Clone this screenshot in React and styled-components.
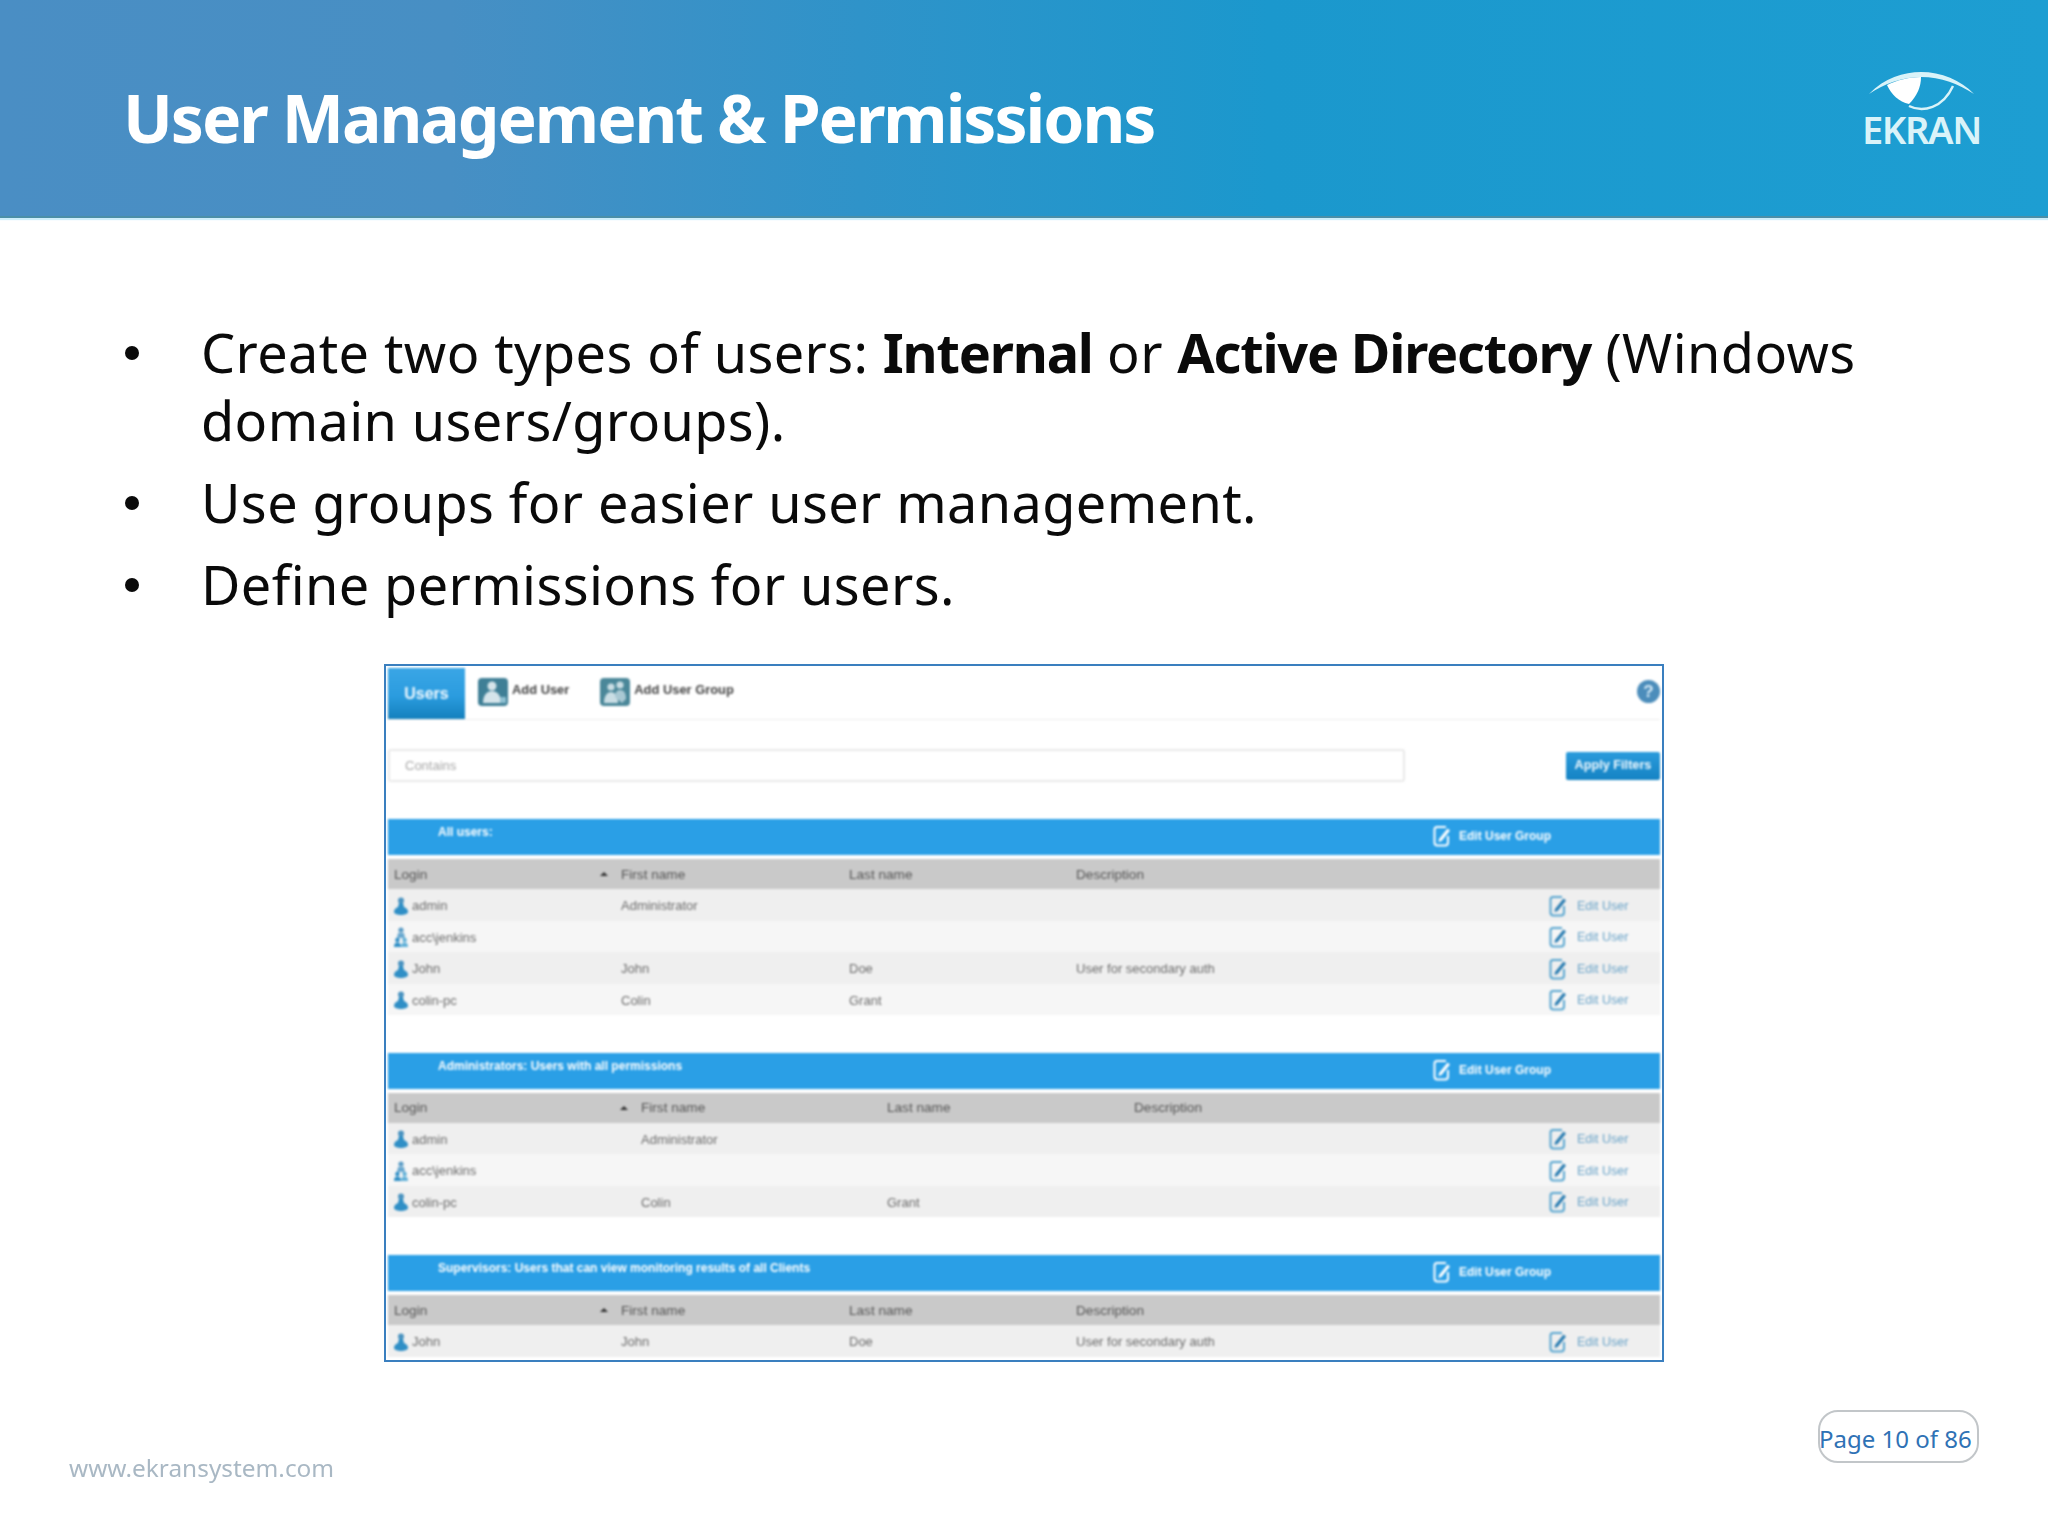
import React from 'react'
import styled, { createGlobalStyle } from 'styled-components'

const GlobalStyle = createGlobalStyle`
  html, body {
    margin: 0;
    padding: 0;
    background: #fff;
  }
`

const Slide = styled.div`
  width: 2048px;
  height: 1536px;
  display: flex;
  flex-direction: column;
  overflow: hidden;
  background: #fff;
  font-family: "Noto Sans", "Open Sans", sans-serif;
`

const Header = styled.header`
  height: 216px;
  flex: none;
  display: flex;
  align-items: flex-start;
  justify-content: space-between;
  padding: 0 68px 0 123px;
  background: linear-gradient(90deg, #4a8ec4 0%, #478fc4 22%, #2f93c9 42%, #1b98cd 62%, #1d9ed2 100%);
  border-bottom: 2px solid #4b8fa8;
  box-shadow: 0 2px 1px #cdeefb;
`

const Title = styled.h1`
  margin: 78px 0 0;
  font-size: 66px;
  line-height: 78px;
  font-weight: 700;
  letter-spacing: -2.05px;
  color: #fff;
  white-space: nowrap;
`

const Logo = styled.div`
  margin-top: 72px;
  width: 117px;
  display: flex;
  flex-direction: column;
  align-items: center;
  color: #d9f3f9;
`

const LogoText = styled.div`
  margin-top: -2px;
  font-size: 38px;
  line-height: 38px;
  font-weight: 600;
  letter-spacing: -1.4px;
`

const Bullets = styled.ul`
  list-style: none;
  margin: 100px 0 0;
  padding: 0 0 0 125px;
  display: flex;
  flex-direction: column;
  gap: 14px;
`

const Bullet = styled.li`
  display: flex;
  font-size: 54px;
  line-height: 68px;
  letter-spacing: 0.4px;
  color: #0a0a0a;
  &::before {
    content: '';
    flex: none;
    width: 14px;
    height: 14px;
    margin: 28px 62px 0 0;
    border-radius: 50%;
    background: #0a0a0a;
  }
  strong {
    font-weight: 700;
    letter-spacing: -1.2px;
  }
`

const Frame = styled.div`
  box-sizing: border-box;
  width: 1280px;
  height: 698px;
  margin: 46px 0 0 384px;
  flex: none;
  border: 2px solid #3a7fbf;
  padding: 2px;
  background: #fff;
  font-family: "Liberation Sans", sans-serif;
`

const FrameInner = styled.div`
  filter: blur(0.9px);
`

const Toolbar = styled.div`
  height: 51px;
  display: flex;
  align-items: flex-start;
  border-bottom: 1px solid #eee;
`

const ActiveTab = styled.div`
  width: 77px;
  height: 51px;
  flex: none;
  display: flex;
  align-items: center;
  justify-content: center;
  background: linear-gradient(180deg, #3aa6e6 0%, #2b9cdf 55%, #1480bd 100%);
  color: #f2faff;
  font-size: 16px;
  font-weight: 700;
`

const ToolButton = styled.div`
  display: flex;
  align-items: flex-start;
  gap: 4px;
  margin-left: ${p => p.$offset}px;
  padding-top: 10px;
  color: #444;
  font-size: 12.9px;
  font-weight: 700;
  line-height: 24px;
  svg {
    flex: none;
  }
`

const HelpIcon = styled.div`
  margin: 12px 0 0 auto;
  width: 23px;
  height: 23px;
  border-radius: 50%;
  background: #4c8dbb;
  color: #d8ecf8;
  font-size: 17px;
  font-weight: 700;
  line-height: 23px;
  text-align: center;
`

const FilterRow = styled.div`
  margin: 29px 0 37px;
  height: 33px;
  display: flex;
  align-items: center;
  justify-content: space-between;
`

const FilterInput = styled.div`
  box-sizing: border-box;
  width: 1017px;
  height: 33px;
  padding-left: 15px;
  border: 2px solid #eaeaea;
  border-radius: 3px;
  color: #a8a8a8;
  font-size: 13px;
  line-height: 29px;
`

const ApplyButton = styled.div`
  width: 94px;
  height: 28px;
  border-radius: 2px;
  background: linear-gradient(180deg, #2a9bdc, #1583c4);
  color: #f2faff;
  font-size: 12.7px;
  font-weight: 700;
  line-height: 26px;
  text-align: center;
`

const Section = styled.section`
  margin-bottom: ${p => p.$gap}px;
`

const SectionBar = styled.div`
  height: 36px;
  display: flex;
  justify-content: space-between;
  padding: 0 108px 0 50px;
  background: #2a9fe6;
  color: #fff;
  font-size: 12px;
  font-weight: 700;
`

const SectionTitle = styled.div`
  line-height: 26px;
`

const EditGroup = styled.div`
  display: flex;
  align-items: center;
  gap: 8px;
  width: 119px;
  line-height: 36px;
  margin-top: -2px;
  svg {
    flex: none;
  }
`

const ColumnRow = styled.div`
  margin-top: 4px;
  height: 30px;
  display: grid;
  grid-template-columns: ${p => p.$cols};
  align-items: center;
  background: #c9c9c9;
  color: #555;
  font-size: 13.6px;
`

const Cell = styled.div`
  padding-left: ${p => p.$pad || 0}px;
  white-space: nowrap;
`

const SortArrow = styled.div`
  width: 0;
  height: 0;
  margin-left: -4px;
  border-left: 4px solid transparent;
  border-right: 4px solid transparent;
  border-bottom: 4px solid #333;
`

const UserRow = styled.div`
  box-sizing: border-box;
  height: 31.5px;
  padding-top: 2px;
  display: grid;
  grid-template-columns: ${p => p.$cols};
  align-items: center;
  background: ${p => (p.$odd ? '#efefef' : '#f6f6f6')};
  color: #6c6c6c;
  font-size: 13px;
`

const LoginCell = styled.div`
  grid-column: span 2;
  display: flex;
  align-items: center;
  gap: 4px;
  padding-left: 6px;
`

const EditUser = styled.div`
  display: flex;
  align-items: center;
  gap: 10px;
  color: #6aa3c8;
  font-size: 12.5px;
  svg {
    flex: none;
  }
`

const Footer = styled.footer`
  flex: 1;
  display: flex;
  align-items: flex-end;
  justify-content: space-between;
  padding: 0 69px;
`

const SiteLink = styled.div`
  margin-bottom: 52px;
  color: #a9b8c4;
  font-size: 24.4px;
  line-height: 32px;
  filter: blur(0.7px);
`

const PageBadge = styled.div`
  box-sizing: border-box;
  width: 161px;
  height: 53px;
  margin-bottom: 73px;
  border: 2px solid #c2c6c9;
  border-radius: 20px;
  color: #2f72b5;
  font-size: 24px;
  line-height: 53px;
  text-indent: -1px;
  white-space: nowrap;
`

const EyeMark = () => (
  <svg width="105" height="40" viewBox="0 0 105 40">
    <path d="M0 22C15 6 35 0 52 0C72 0 92 8 105 22C90 12 72 5 52 5C34 5 14 12 0 22Z" fill="currentColor" />
    <path d="M18 13C28 8 40 5 52 5C52 15 48 24 40 32C30 30 22 22 18 13Z" fill="#fff" />
    <path d="M40 34C54 41 74 36 84 14" fill="none" stroke="currentColor" strokeWidth="2.4" />
  </svg>
)

const AddUserIcon = () => (
  <svg width="30" height="28" viewBox="0 0 30 28">
    <rect width="30" height="28" rx="4" fill="#3f7f96" />
    <circle cx="14" cy="8" r="4.5" fill="#d5e4ea" />
    <path d="M5 25C5 17 9 13 14 13C19 13 23 17 23 25Z" fill="#d5e4ea" />
    <path d="M22 19h6v6h-6z" fill="#8fc0d2" />
  </svg>
)

const AddGroupIcon = () => (
  <svg width="30" height="28" viewBox="0 0 30 28">
    <rect width="30" height="28" rx="4" fill="#4a8799" />
    <circle cx="11" cy="9" r="3.6" fill="#c9dde4" />
    <circle cx="20" cy="7" r="3.6" fill="#c9dde4" />
    <path d="M4 25C4 18 7 14 11 14C15 14 18 18 18 25Z" fill="#c9dde4" />
    <path d="M15 19C15 14 17 12 20 12C24 12 26 15 26 21L22 25Z" fill="#a9c8d3" />
  </svg>
)

const UserIcon = () => (
  <svg width="14" height="18" viewBox="0 0 14 18">
    <circle cx="7" cy="3.6" r="3" fill="#4a93c0" />
    <path d="M5 6H9L10 10C13 11 14 13 14 15C14 17 10 18 7 18C4 18 0 17 0 15C0 13 1 11 4 10Z" fill="#2f8fc6" />
  </svg>
)

const GroupIcon = () => (
  <svg width="14" height="20" viewBox="0 0 14 20">
    <circle cx="7" cy="3" r="2.6" fill="#5a9cc6" />
    <path d="M4 6H10L11 11H3Z" fill="#6aa9d0" />
    <circle cx="3.4" cy="13" r="2.2" fill="#2f8fc6" />
    <circle cx="10.6" cy="13" r="2.2" fill="#5fb0d8" />
    <path d="M0 20C0 17 1 15.5 3.4 15.5C6 15.5 7 17 7 20Z" fill="#2f8fc6" />
    <path d="M7 20C7 17 8 15.5 10.6 15.5C13 15.5 14 17 14 20Z" fill="#5fb0d8" />
  </svg>
)

const EditIcon = ({ color, pen }) => (
  <svg width="18" height="22" viewBox="0 0 18 22">
    <path d="M13 2H4C2.3 2 1.5 3 1.5 4.5V17.5C1.5 19.5 2.5 20.5 4.5 20.5H12C14 20.5 15 19.5 15 17.5V11" fill="none" stroke={color} strokeWidth="2" />
    <path d="M6 14L14.5 3.5L17 5.5L8.5 16L5.5 17Z" fill={pen} />
  </svg>
)

const wideCols = '216px 17px 228px 227px 473px 111px'
const narrowCols = '236px 17px 246px 247px 415px 111px'

const sections = [
  {
    title: 'All users:',
    cols: wideCols,
    gap: 37.5,
    users: [
      { login: 'admin', first: 'Administrator' },
      { login: 'acc\\jenkins', group: true },
      { login: 'John', first: 'John', last: 'Doe', desc: 'User for secondary auth' },
      { login: 'colin-pc', first: 'Colin', last: 'Grant' },
    ],
  },
  {
    title: 'Administrators: Users with all permissions',
    cols: narrowCols,
    gap: 38,
    users: [
      { login: 'admin', first: 'Administrator' },
      { login: 'acc\\jenkins', group: true },
      { login: 'colin-pc', first: 'Colin', last: 'Grant' },
    ],
  },
  {
    title: 'Supervisors: Users that can view monitoring results of all Clients',
    cols: wideCols,
    gap: 0,
    users: [{ login: 'John', first: 'John', last: 'Doe', desc: 'User for secondary auth' }],
  },
]

const App = () => (
  <Slide>
    <GlobalStyle />
    <Header>
      <Title>User Management &amp; Permissions</Title>
      <Logo>
        <EyeMark />
        <LogoText>EKRAN</LogoText>
      </Logo>
    </Header>
    <Bullets>
      <Bullet>
        <span>
          Create two types of users: <strong>Internal</strong> or <strong>Active Directory</strong> (Windows
          <br />
          domain users/groups).
        </span>
      </Bullet>
      <Bullet>Use groups for easier user management.</Bullet>
      <Bullet>Define permissions for users.</Bullet>
    </Bullets>
    <Frame>
      <FrameInner>
        <Toolbar>
          <ActiveTab>Users</ActiveTab>
          <ToolButton $offset={13}>
            <AddUserIcon />
            Add User
          </ToolButton>
          <ToolButton $offset={31}>
            <AddGroupIcon />
            Add User Group
          </ToolButton>
          <HelpIcon>?</HelpIcon>
        </Toolbar>
        <FilterRow>
          <FilterInput>Contains</FilterInput>
          <ApplyButton>Apply Filters</ApplyButton>
        </FilterRow>
        {sections.map(section => (
          <Section key={section.title} $gap={section.gap}>
            <SectionBar>
              <SectionTitle>{section.title}</SectionTitle>
              <EditGroup>
                <EditIcon color="#fff" pen="#fff" />
                Edit User Group
              </EditGroup>
            </SectionBar>
            <ColumnRow $cols={section.cols}>
              <Cell $pad={6}>Login</Cell>
              <SortArrow />
              <Cell>First name</Cell>
              <Cell>Last name</Cell>
              <Cell>Description</Cell>
            </ColumnRow>
            {section.users.map((user, i) => (
              <UserRow key={user.login} $cols={section.cols} $odd={i % 2 === 0}>
                <LoginCell>
                  {user.group ? <GroupIcon /> : <UserIcon />}
                  {user.login}
                </LoginCell>
                <Cell>{user.first}</Cell>
                <Cell>{user.last}</Cell>
                <Cell>{user.desc}</Cell>
                <EditUser>
                  <EditIcon color="#58a6d0" pen="#2a7db2" />
                  Edit User
                </EditUser>
              </UserRow>
            ))}
          </Section>
        ))}
      </FrameInner>
    </Frame>
    <Footer>
      <SiteLink>www.ekransystem.com</SiteLink>
      <PageBadge>Page 10 of 86</PageBadge>
    </Footer>
  </Slide>
)

export default App
